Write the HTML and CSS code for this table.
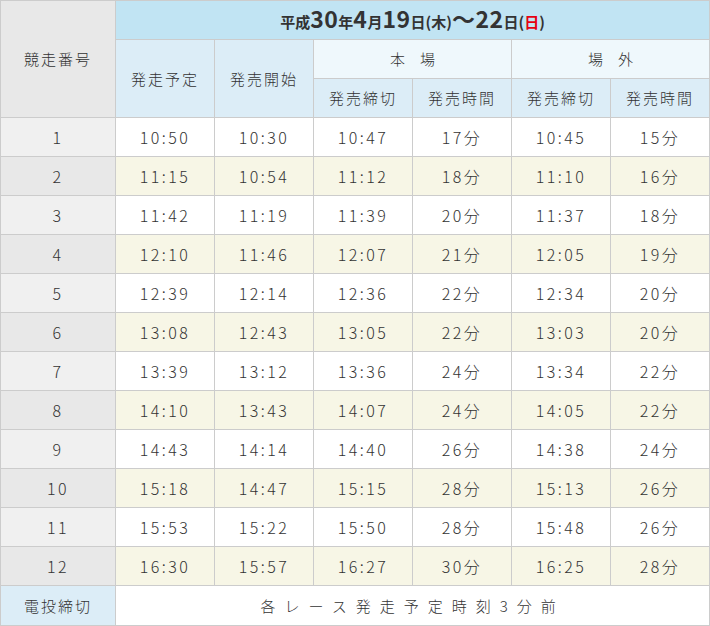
FILE: index.html
```html
<!DOCTYPE html>
<html lang="ja">
<head>
<meta charset="utf-8">
<link rel="stylesheet" href="styles.css">
</head>
<body>
<table class="schedule">
  <colgroup>
    <col class="c-no"><col class="c-t"><col class="c-t"><col class="c-t"><col class="c-t"><col class="c-t"><col class="c-t">
  </colgroup>
  <thead>
    <tr>
      <th class="h-no" rowspan="3">競走番号</th>
      <th class="h-title" colspan="6"><span class="s">平成</span><span class="n">30</span><span class="s">年</span><span class="n">4</span><span class="s">月</span><span class="n">19</span><span class="s">日(木)</span><span class="n">〜22</span><span class="s">日(<span class="red">日</span>)</span></th>
    </tr>
    <tr>
      <th class="h-sub" rowspan="2">発走予定</th>
      <th class="h-sub" rowspan="2">発売開始</th>
      <th class="h-place" colspan="2">本　場</th>
      <th class="h-place" colspan="2">場　外</th>
    </tr>
    <tr>
      <th class="h-sub">発売締切</th>
      <th class="h-sub">発売時間</th>
      <th class="h-sub">発売締切</th>
      <th class="h-sub">発売時間</th>
    </tr>
  </thead>
  <tbody>
    <tr><th>1</th><td>10:50</td><td>10:30</td><td>10:47</td><td>17分</td><td>10:45</td><td>15分</td></tr>
    <tr class="alt"><th>2</th><td>11:15</td><td>10:54</td><td>11:12</td><td>18分</td><td>11:10</td><td>16分</td></tr>
    <tr><th>3</th><td>11:42</td><td>11:19</td><td>11:39</td><td>20分</td><td>11:37</td><td>18分</td></tr>
    <tr class="alt"><th>4</th><td>12:10</td><td>11:46</td><td>12:07</td><td>21分</td><td>12:05</td><td>19分</td></tr>
    <tr><th>5</th><td>12:39</td><td>12:14</td><td>12:36</td><td>22分</td><td>12:34</td><td>20分</td></tr>
    <tr class="alt"><th>6</th><td>13:08</td><td>12:43</td><td>13:05</td><td>22分</td><td>13:03</td><td>20分</td></tr>
    <tr><th>7</th><td>13:39</td><td>13:12</td><td>13:36</td><td>24分</td><td>13:34</td><td>22分</td></tr>
    <tr class="alt"><th>8</th><td>14:10</td><td>13:43</td><td>14:07</td><td>24分</td><td>14:05</td><td>22分</td></tr>
    <tr><th>9</th><td>14:43</td><td>14:14</td><td>14:40</td><td>26分</td><td>14:38</td><td>24分</td></tr>
    <tr class="alt"><th>10</th><td>15:18</td><td>14:47</td><td>15:15</td><td>28分</td><td>15:13</td><td>26分</td></tr>
    <tr><th>11</th><td>15:53</td><td>15:22</td><td>15:50</td><td>28分</td><td>15:48</td><td>26分</td></tr>
    <tr class="alt"><th>12</th><td>16:30</td><td>15:57</td><td>16:27</td><td>30分</td><td>16:25</td><td>28分</td></tr>
    <tr class="foot"><th>電投締切</th><td colspan="6">各レース発走予定時刻3分前</td></tr>
  </tbody>
</table>
</body>
</html>
```

FILE: styles.css
```css
html, body {
  margin: 0;
  padding: 0;
  background: #fff;
}
.schedule {
  border-collapse: collapse;
  table-layout: fixed;
  width: 710px;
  font-family: "Noto Sans CJK JP", "Noto Sans", sans-serif;
  font-weight: 300;
  color: #333;
}
.c-no { width: 115px; }
.c-t { width: 99px; }
.schedule th, .schedule td {
  border: 1px solid #cccccc;
  height: 38px;
  padding: 0;
  text-align: center;
  vertical-align: middle;
  font-weight: 300;
  font-size: 16px;
  letter-spacing: 2.5px;
  line-height: 20px;
}
.schedule thead th {
  font-size: 15px;
  letter-spacing: 2px;
  background: #dcedf7;
}
.schedule thead th.h-no {
  background: #e8e8e8;
}
.schedule thead th.h-title {
  background: #c1e4f3;
  font-weight: bold;
  letter-spacing: 0;
  color: #333;
}
.h-title .s { font-size: 15px; }
.h-title .n { font-size: 23px; letter-spacing: 0.5px; }
.h-title .red { color: #e60012; }
.schedule thead th.h-place {
  background: #eff8fc;
  letter-spacing: 0;
}
.schedule tbody th {
  background: #f0f0f0;
}
.schedule tbody tr.alt th {
  background: #e8e8e8;
}
.schedule tbody tr.alt td {
  background: #f7f6e6;
}
.schedule tbody tr.foot th {
  background: #dcedf7;
  font-size: 15px;
  letter-spacing: 2px;
}
.schedule tbody tr.foot td {
  font-size: 15px;
  letter-spacing: 9px;
  height: 39px;
}
```
